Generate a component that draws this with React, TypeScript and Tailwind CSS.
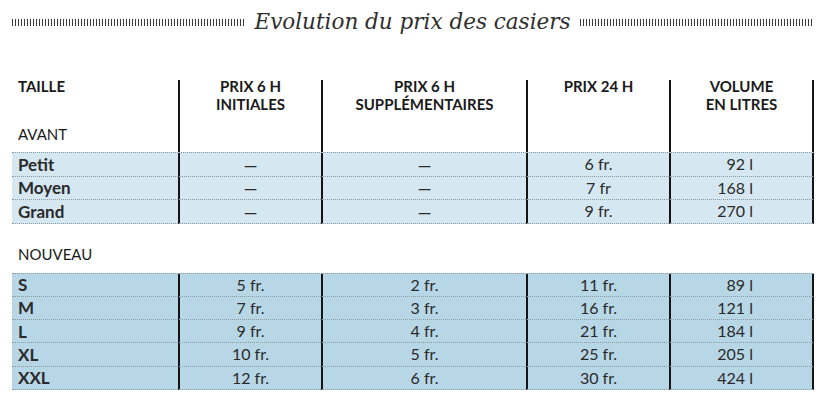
const font = { fontFamily: "Lato, 'Liberation Sans', sans-serif" };

const cols = "grid grid-cols-[166px_143px_205px_143px_145px]";

type Row = [string, string, string, string, string];

const avant: Row[] = [
  ["Petit", "–", "–", "6 fr.", "92 l"],
  ["Moyen", "–", "–", "7 fr", "168 l"],
  ["Grand", "–", "–", "9 fr.", "270 l"],
];

const nouveau: Row[] = [
  ["S", "5 fr.", "2 fr.", "11 fr.", "89 l"],
  ["M", "7 fr.", "3 fr.", "16 fr.", "121 l"],
  ["L", "9 fr.", "4 fr.", "21 fr.", "184 l"],
  ["XL", "10 fr.", "5 fr.", "25 fr.", "205 l"],
  ["XXL", "12 fr.", "6 fr.", "30 fr.", "424 l"],
];

const Hatch = () => (
  <div className="flex-1 h-[7px] bg-[repeating-linear-gradient(90deg,#3a3a3a_0_1px,transparent_1px_3px)]" />
);

function Section({ rows, bg, h }: { rows: Row[]; bg: string; h: string }) {
  return (
    <div className={`${cols} border-t border-dotted border-[#8a9aa3] ${bg}`}>
      {rows.map((r) =>
        r.map((cell, i) => {
          let cls = `${h} flex items-center border-b border-solid [border-bottom-style:dotted] border-b-[#8a9aa3] text-[16px] text-[#2a2a2a] `;
          if (i === 0) cls += "pl-[6px] text-[17px] font-bold text-[#1a1a1a]";
          else if (i === 4) cls += "justify-end pr-[59px] border-l-2 border-l-[#151515] border-r-2 border-r-[#151515]";
          else cls += "justify-center border-l-2 border-l-[#151515]";
          return (
            <div key={r[0] + i} className={cls}>
              {cell === "–" ? (
                <span className="text-[21px] leading-none" style={{ fontFamily: "'Liberation Sans', sans-serif" }}>
                  –
                </span>
              ) : (
                cell
              )}
            </div>
          );
        })
      )}
    </div>
  );
}

export default function App() {
  const head = "h-[72px] border-l-2 border-[#151515] text-center text-[15px] font-bold leading-[18px] text-[#1a1a1a]";
  return (
    <div className="w-[823px] h-[400px] bg-white overflow-hidden" style={font}>
      {/* titre */}
      <div className="flex items-center gap-[9px] pl-[12px] pr-[10px] pt-[6px] h-[38px]">
        <Hatch />
        <span
          className="italic text-[21.5px] leading-[28px] text-[#2e2e2e] -mt-[1px]"
          style={{ fontFamily: "'DejaVu Serif', serif" }}
        >
          Evolution du prix des casiers
        </span>
        <Hatch />
      </div>

      <div className="ml-[12px] w-[802px] mt-[42px]">
        {/* en-tête */}
        <div className={cols}>
          <div className="h-[72px] flex flex-col justify-between pl-[6px] pb-[9px] text-[#1a1a1a]">
            <div className="text-[15px] font-bold leading-[18px] -mt-[3px]">TAILLE</div>
            <div className="text-[15px] leading-[18px]">AVANT</div>
          </div>
          <div className={head}>
            <div className="-mt-[3px]">PRIX 6 H<br />INITIALES</div>
          </div>
          <div className={head}>
            <div className="-mt-[3px]">PRIX 6 H<br />SUPPLÉMENTAIRES</div>
          </div>
          <div className={head}>
            <div className="-mt-[3px]">PRIX 24 H</div>
          </div>
          <div className={head + " border-r-2"}>
            <div className="-mt-[3px]">VOLUME<br />EN LITRES</div>
          </div>
        </div>

        <Section rows={avant} bg="bg-[#d5e7f1]" h="h-[23.6px]" />

        <div className="pl-[6px] pt-[21px] pb-[10px] text-[15px] leading-[18px] text-[#1a1a1a]">NOUVEAU</div>

        <Section rows={nouveau} bg="bg-[#b8d7e6]" h="h-[23.2px]" />
      </div>
    </div>
  );
}
